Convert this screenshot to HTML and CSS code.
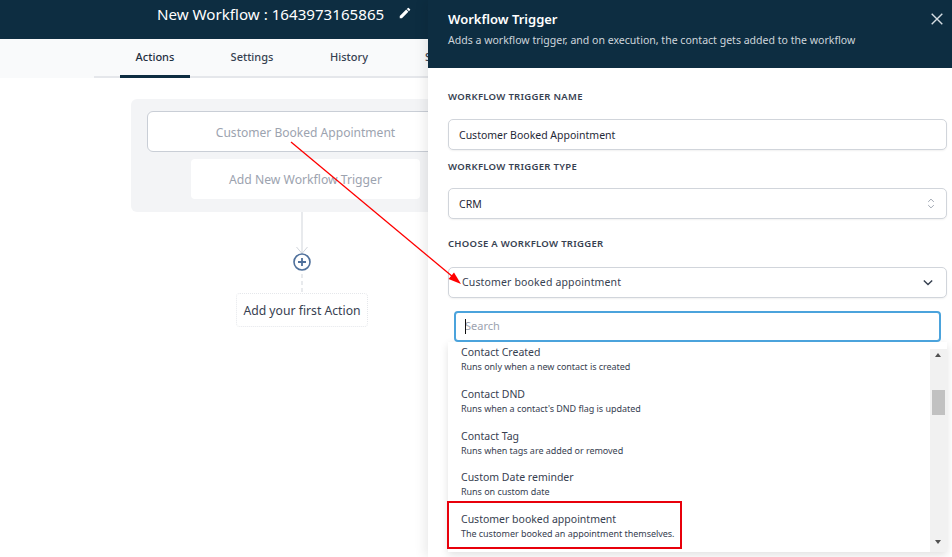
FILE: index.html
```html
<!DOCTYPE html>
<html lang="en">
<head>
<meta charset="utf-8">
<title>New Workflow</title>
<link rel="stylesheet" href="styles.css">
</head>
<body>
<div class="page">
  <header class="topbar">
    <span class="title">New Workflow : 1643973165865</span>
    <svg class="pencil" viewBox="0 0 24 24" width="14" height="14"><path fill="#fff" d="M3 17.25V21h3.75L17.81 9.94l-3.75-3.75L3 17.25zM20.71 7.04a1 1 0 0 0 0-1.41l-2.34-2.34a1 1 0 0 0-1.41 0l-1.83 1.83 3.75 3.75 1.83-1.83z"/></svg>
  </header>
  <nav class="tabs">
    <span class="tab active">Actions</span>
    <span class="tab">Settings</span>
    <span class="tab">History</span>
    <span class="tab">Status</span>
  </nav>
  <main class="canvas">
    <div class="flow">
      <section class="trigger-card">
        <div class="trigger-box">Customer Booked Appointment</div>
        <div class="trigger-add">Add New Workflow Trigger</div>
      </section>
      <svg class="connector" viewBox="0 0 40 96" width="40" height="96">
        <path d="M20 0V41M14.500 35l5.500 6.500 5.500-6.500" fill="none" stroke="#d1d5db" stroke-width="1"/>
        <circle cx="20" cy="50" r="8" fill="#fff" stroke="#4f709b" stroke-width="1.600"/>
        <path d="M16 50h8M20 46v8" stroke="#4f709b" stroke-width="1.800"/>
        <path d="M20 62V81" stroke="#d1d5db" stroke-width="1" stroke-dasharray="4 3"/>
      </svg>
      <div class="action-box">Add your first Action</div>
    </div>
  </main>
  <aside class="drawer">
    <div class="drawer-head">
      <h2 class="drawer-title">Workflow Trigger</h2>
      <p class="drawer-sub">Adds a workflow trigger, and on execution, the contact gets added to the workflow</p>
      <svg class="close" viewBox="0 0 12 12" width="12" height="12"><path d="M.7.7l10.600 10.600M11.300.7L.7 11.300" stroke="#d5dde3" stroke-width="1.400" fill="none"/></svg>
    </div>
    <div class="drawer-body">
      <div class="label label-first">WORKFLOW TRIGGER NAME</div>
      <div class="field">Customer Booked Appointment</div>
      <div class="label label-second">WORKFLOW TRIGGER TYPE</div>
      <div class="field field-select">CRM
        <svg viewBox="0 0 10 16" width="8" height="13"><path d="M1.500 6L5 2.500 8.500 6M1.500 10L5 13.500 8.500 10" fill="none" stroke="#9ca3af" stroke-width="1.200"/></svg>
      </div>
      <div class="label label-third">CHOOSE A WORKFLOW TRIGGER</div>
      <div class="field field-choice">Customer booked appointment
        <svg viewBox="0 0 12 8" width="10" height="7"><path d="M1 1.500l5 5 5-5" fill="none" stroke="#374151" stroke-width="1.700"/></svg>
      </div>
      <div class="dropdown">
        <div class="search"><span class="caret"></span><span class="search-text">Search</span></div>
        <div class="list-wrap">
          <ul class="options">
            <li class="option"><div class="opt-name">Contact Created</div><div class="opt-desc">Runs only when a new contact is created</div></li>
            <li class="option"><div class="opt-name">Contact DND</div><div class="opt-desc">Runs when a contact's DND flag is updated</div></li>
            <li class="option"><div class="opt-name">Contact Tag</div><div class="opt-desc">Runs when tags are added or removed</div></li>
            <li class="option"><div class="opt-name">Custom Date reminder</div><div class="opt-desc">Runs on custom date</div></li>
            <li class="option"><div class="opt-name">Customer booked appointment</div><div class="opt-desc">The customer booked an appointment themselves.</div></li>
          </ul>
          <div class="scrollbar">
            <span class="sb-up"></span>
            <span class="sb-thumb"></span>
            <span class="sb-down"></span>
          </div>
        </div>
      </div>
    </div>
  </aside>
  <svg class="annot" viewBox="0 0 952 557" width="952" height="557">
    <path d="M291 142L453 277" stroke="#f00" stroke-width="1.300" fill="none"/>
    <path d="M461 284L448.500 279L454 272.500Z" fill="#f00"/>
  </svg>
  <div class="redbox"></div>
</div>
</body>
</html>
```

FILE: styles.css
```css
* { box-sizing: border-box; }
html, body { margin: 0; padding: 0; }
body { font-family: "Noto Sans", "Open Sans", sans-serif; color: #374151; background: #fff; overflow: hidden; }
.page { position: relative; width: 952px; height: 557px; overflow: hidden; background: #fff; }

.topbar { height: 39px; background: #0d2d41; display: flex; align-items: center; padding-left: 157px; padding-bottom: 13px; padding-top: 1px; color: #fff; }
.title { font-size: 15.150px; line-height: 20px; width: 241px; white-space: nowrap; }
.pencil { display: block; margin-top: -1px; }

.tabs { height: 39px; background: #f9fafb; padding-left: 120px; display: flex; position: relative; }
.tabs::after { content: ""; position: absolute; left: 94px; right: 0; bottom: 0; height: 2px; background: #e5e7eb; }
.tab { font-size: 11px; line-height: 36px; font-weight: 500; color: #374151; width: 80px; text-align: center; white-space: nowrap; position: relative; z-index: 1; }
.tab.active { width: 70px; margin-right: 22px; border-bottom: 3px solid #0d2d41; color: #1f2f3f; }
.tab:nth-child(2) { margin-right: 17px; }
.tab:nth-child(3) { margin-right: 36px; }
.tab:nth-child(4) { text-align: left; }

.canvas { padding: 21px 0 0 131px; }
.flow { width: 342px; display: flex; flex-direction: column; align-items: center; }
.trigger-card { align-self: flex-start; width: 349px; height: 113px; background: #f3f4f6; border-radius: 6px; padding: 12px 16px; display: flex; flex-direction: column; align-items: center; }
.trigger-box { width: 100%; height: 41px; flex: none; background: #fff; border: 1px solid #c9ced6; border-radius: 6px; color: #9ca3af; font-size: 12.050px; line-height: 41px; text-align: center; }
.trigger-add { width: 229px; height: 40px; flex: none; margin-top: 7px; background: #fff; border-radius: 4px; color: #9ca3af; font-size: 12.200px; line-height: 42px; text-align: center; }
.connector { display: block; flex: none; margin-left: -1px; }
.action-box { height: 34px; width: 132px; flex: none; margin-top: -15px; background: #fff; border: 1px dotted #e5e7eb; border-radius: 4px; font-size: 12.200px; line-height: 34px; text-align: center; white-space: nowrap; color: #374151; }

.drawer { position: absolute; z-index: 2; left: 428px; top: 0; width: 524px; height: 557px; background: #fff; box-shadow: -4px 0 10px rgba(0, 0, 0, .08); }
.drawer-head { height: 68px; background: #0d2d41; padding: 9px 20px 0; position: relative; }
.drawer-title { margin: 0; font-size: 13px; line-height: 20px; font-weight: 600; color: #fff; }
.drawer-sub { margin: 3px 0 0; font-size: 10.550px; line-height: 16px; color: #cdd5db; white-space: nowrap; }
.close { position: absolute; left: 503px; top: 13px; display: block; }

.drawer-body { padding: 0 5px 0 20px; }
.label { font-size: 9.500px; letter-spacing: .3px; line-height: 14px; font-weight: 600; color: #374151; white-space: nowrap; }
.label-first { padding-top: 22px; height: 51px; }
.label-second { padding-top: 10px; height: 38px; }
.label-third { padding-top: 18px; height: 48px; }
.field { height: 31px; background: #fff; border: 1px solid #d1d5db; border-radius: 5px; box-shadow: 0 1px 2px rgba(0, 0, 0, .06); padding: 2px 10px 0; font-size: 10.500px; line-height: 27px; color: #1f2937; display: flex; justify-content: space-between; align-items: center; }
.field-select svg { margin-right: 1px; margin-top: -2px; }
.field-choice { padding: 0 13px; letter-spacing: .15px; color: #374151; }

.dropdown { padding-top: 13px; }
.search { margin: 0 6px; height: 31px; background: #fff; border: 2px solid #4ba3dc; border-radius: 4px; padding: 0 0 2px 9px; display: flex; align-items: center; position: relative; font-size: 11px; color: #9ca3af; }
.caret { position: absolute; left: 9px; top: 6px; width: 1px; height: 15px; background: #111; }
.list-wrap { height: 210px; background: #fff; display: flex; justify-content: space-between; box-shadow: 0 3px 8px rgba(0, 0, 0, .12); overflow: hidden; }
.options { list-style: none; margin: 0; padding: 3.300px 0 0 13px; }
.option { height: 41.700px; }
.opt-name { font-size: 10.500px; line-height: 15px; color: #374151; white-space: nowrap; }
.opt-desc { font-size: 9px; letter-spacing: -.04px; line-height: 14px; color: #374151; white-space: nowrap; }
.scrollbar { width: 17px; height: 100%; margin-top: 7px; background: #f1f1f1; position: relative; }
.sb-up { position: absolute; left: 5px; top: 4px; border: 3.500px solid transparent; border-top: 0; border-bottom: 4px solid #505050; }
.sb-thumb { position: absolute; left: 2px; top: 41px; width: 13px; height: 25px; background: #c1c1c1; }
.sb-down { position: absolute; left: 5px; top: 191px; border: 3.500px solid transparent; border-bottom: 0; border-top: 4px solid #505050; }

.annot { position: absolute; z-index: 3; left: 0; top: 0; display: block; pointer-events: none; }
.redbox { position: absolute; z-index: 3; left: 447px; top: 501px; width: 235px; height: 48px; border: 2px solid #e8000b; }
```
